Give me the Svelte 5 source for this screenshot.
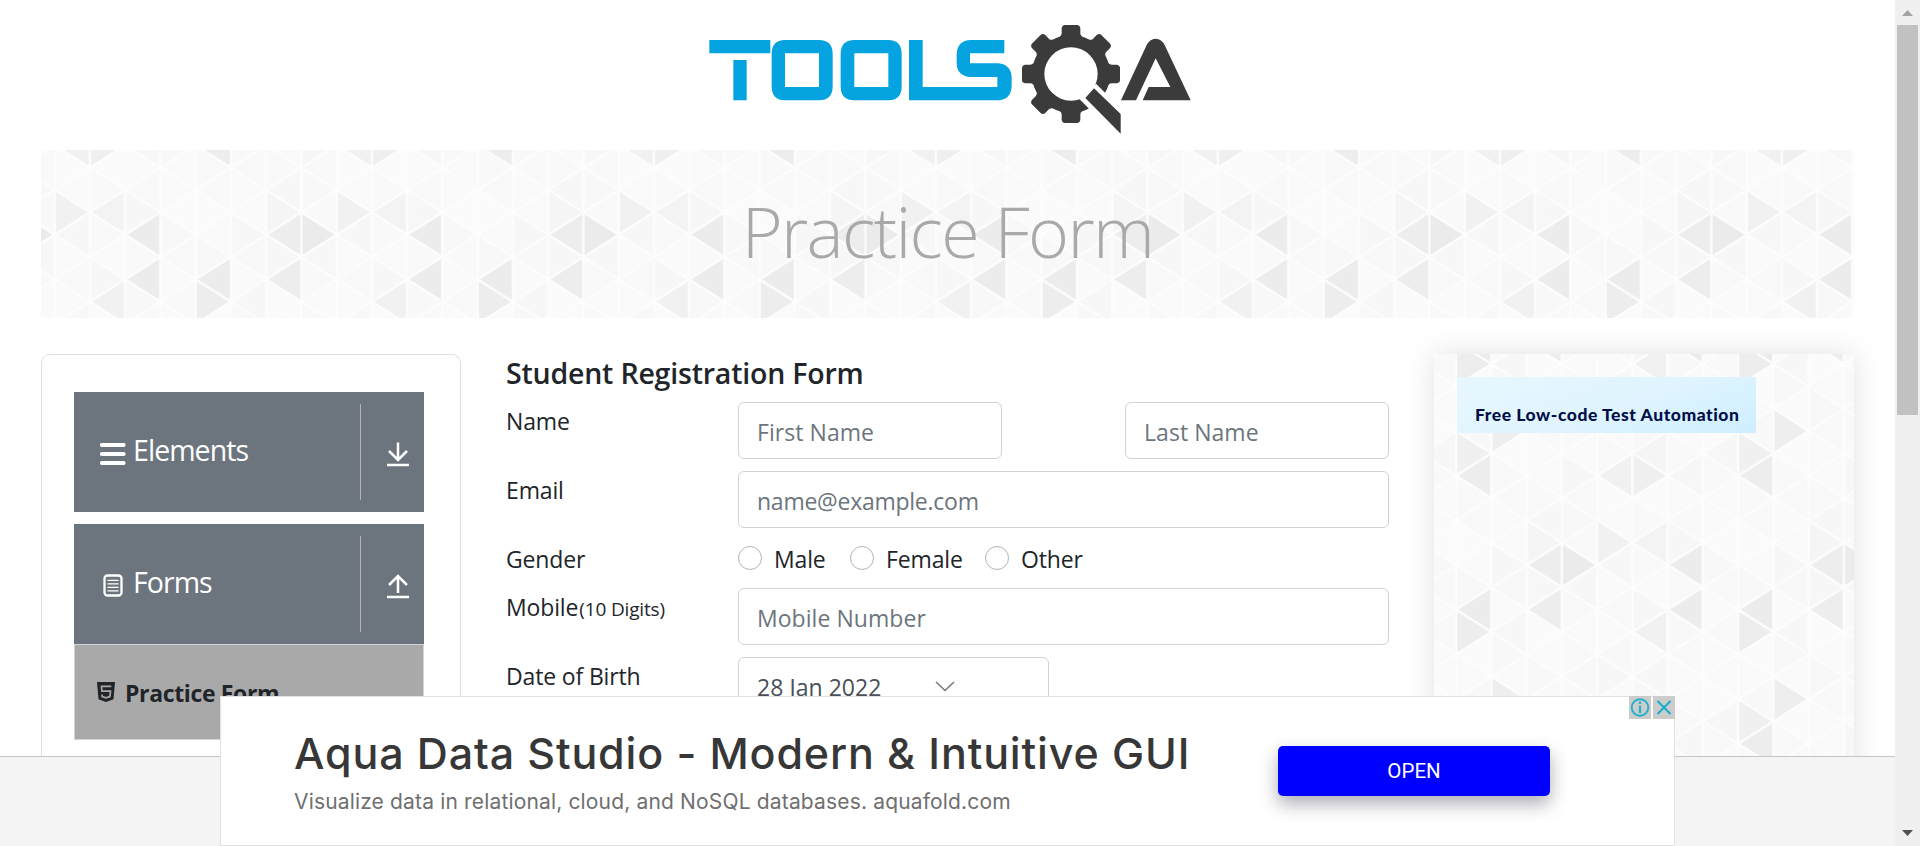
<script>
  const COL = 35.25;
  const ROW = 22.34;
  const key = {
    '0,0': '#ededed', '5,0': '#f1f1f1', '1,3': '#eeeeee', '0,4': '#f0f0f0', '0,5': '#ededed',
    '4,5': '#f1f1f1', '5,5': '#efefef', '5,4': '#f5f5f5', '4,8': '#f1f1f1', '5,8': '#f3f3f3',
    '2,8': '#f5f5f5', '2,9': '#ededed', '3,9': '#ebebeb', '6,9': '#ececec', '0,11': '#ececec',
    '2,11': '#ededed', '6,11': '#ececec'
  };
  const soft = ['#f9f9f9', '#fafafa', '#f8f8f8', '#fbfbfb', '#f9f9f9', '#f7f7f7', '#fafafa'];
  const triangles = [];
  for (let c = 0; c < 8; c++) {
    for (let r = -1; r <= 12; r++) {
      const j = (r + 12) % 12;
      const fill = key[`${c},${j}`] ?? soft[(c * 5 + j * 3 + ((c * j) % 4)) % 7];
      const y = r * ROW;
      const l = c * COL;
      const rt = l + COL;
      const points = (c + j) % 2 === 0
        ? `${l},${y - ROW} ${rt},${y} ${l},${y + ROW}`
        : `${rt},${y - ROW} ${l},${y} ${rt},${y + ROW}`;
      triangles.push({ points, fill });
    }
  }
  const teeth = [0, 45, 90, 180, 225, 270, 315];
  const genders = ['Male', 'Female', 'Other'];
</script>

{#snippet texture(id, x, y)}
  <svg class="texture" aria-hidden="true">
    <defs>
      <pattern {id} {x} {y} width="282" height="268.08" patternUnits="userSpaceOnUse">
        {#each triangles as t}
          <polygon points={t.points} fill={t.fill} stroke="#fdfdfd" stroke-width="2.2" />
        {/each}
      </pattern>
    </defs>
    <rect width="100%" height="100%" fill="url(#{id})" />
  </svg>
{/snippet}

<div class="window">
  <div class="page">
    <header>
      <svg class="logo" viewBox="0 0 1560 420" role="img" aria-label="ToolsQA">
        <g fill="#05a3e0">
          <path d="M58 90H241V130H58zM130 150H170V271H130z" />
          <path fill-rule="evenodd" d="M285 90H387Q428 90 428 132V229Q428 271 387 271H285Q245 271 245 229V132Q245 90 285 90zM285 130V231H387V130z" />
          <path fill-rule="evenodd" d="M493 90H595Q635 90 635 132V229Q635 271 595 271H493Q452 271 452 229V132Q452 90 493 90zM493 130V231H595V130z" />
          <path d="M657 90H698V231H922V201H842Q800 198 800 158V132Q802 92 842 90H943V130H840V160H925Q963 164 965 202V229Q963 269 925 271H657z" />
        </g>
        <g fill="#3b3b3b">
          <circle cx="1143" cy="192" r="117" />
          {#each teeth as a}
            <path transform="rotate({a} 1143 192)" d="M1101 84Q1115 80 1115 70V54Q1117 45 1125 45H1161Q1169 45 1171 54V70Q1171 80 1185 84V110H1101z" />
          {/each}
          <circle cx="1143" cy="192" r="80" fill="#fff" />
          <path fill="#fff" d="M1219 222L1251 254L1320 300V390L1250 350L1198 297L1168 267z" />
          <path d="M1212 235L1292 312V371L1186 264z" />
          <path d="M1293 271L1369 107Q1379 86 1397 86Q1415 86 1425 107L1502 271H1358L1376 231H1441L1397 145L1338 271z" />
        </g>
      </svg>
    </header>

    <section class="banner">
      {@render texture('tex-banner', -127.3, -116.3)}
      <h1>Practice Form</h1>
    </section>

    <main>
      <nav class="menu">
        <div class="group">
          <svg class="gicon" viewBox="0 0 30 30"><path d="M3.800 8H25.700M3.800 17H25.700M3.800 26H25.700" stroke="#fff" stroke-width="3.800" stroke-linecap="round" /></svg>
          <span class="gname">Elements</span>
          <span class="toggle">
            <svg viewBox="0 0 24 26"><path d="M12 1.5V19.500M3 10L12 19L21 10M1 24H23" fill="none" stroke="#fff" stroke-width="2.500" /></svg>
          </span>
        </div>
        <div class="group second">
          <svg class="gicon" viewBox="0 0 30 30"><rect x="6.500" y="6.500" width="17" height="20" rx="3" fill="none" stroke="#fff" stroke-width="2.300" /><path d="M9.500 11.300H20.500M9.500 14.800H20.500M9.500 18.300H20.500M9.500 21.800H20.500" stroke="#fff" stroke-width="1.300" /></svg>
          <span class="gname">Forms</span>
          <span class="toggle">
            <svg viewBox="0 0 24 26"><path d="M12 20V2.500M3 12L12 3L21 12M1 24H23" fill="none" stroke="#fff" stroke-width="2.500" /></svg>
          </span>
        </div>
        <div class="entry">
          <svg class="html5" viewBox="0 0 18 20"><path d="M0 0H18L16.500 17.300L9 20L1.500 17.300z" fill="#212529" /><path d="M14.300 4.300H4.500L4.900 9.100H13.500L12.900 14.600L9 15.900L5.200 14.600L5 12.500" fill="none" stroke="#a9a9a9" stroke-width="1.700" /></svg>
          <span>Practice Form</span>
        </div>
      </nav>

      <form>
        <h5>Student Registration Form</h5>
        <div class="row">
          <label for="first">Name</label>
          <div class="pair">
            <input id="first" placeholder="First Name" />
            <input placeholder="Last Name" aria-label="Last Name" />
          </div>
        </div>
        <div class="row">
          <label for="email">Email</label>
          <input id="email" class="email" placeholder="name@example.com" />
        </div>
        <div class="row gender">
          <span class="label">Gender</span>
          <div class="radios">
            {#each genders as g}
              <span class="radio {g.toLowerCase()}"><i></i><b>{g}</b></span>
            {/each}
          </div>
        </div>
        <div class="row">
          <label for="mobile">Mobile<small>(10 Digits)</small></label>
          <input id="mobile" placeholder="Mobile Number" />
        </div>
        <div class="row">
          <span class="label">Date of Birth</span>
          <div class="date">
            <span>28 Jan 2022</span>
            <svg viewBox="0 0 20 11"><path d="M1 1L10 9.500L19 1" fill="none" stroke="#777" stroke-width="1.500" /></svg>
          </div>
        </div>
      </form>

      <aside>
        {@render texture('tex-aside', 22.2, 10)}
        <div class="promo">Free Low-code Test Automation</div>
      </aside>
    </main>
    <footer></footer>

    <div class="ad">
      <div class="copy">
        <div class="title">Aqua Data Studio - Modern &amp; Intuitive GUI</div>
        <div class="desc">Visualize data in relational, cloud, and NoSQL databases. aquafold.com</div>
      </div>
      <button>OPEN</button>
      <div class="choices">
        <svg viewBox="0 0 22 23"><circle cx="11" cy="11.500" r="8.300" fill="none" stroke="#22b1cc" stroke-width="1.900" /><path d="M11 9.800V17M11 5.800V8" stroke="#22b1cc" stroke-width="2.300" /></svg>
        <svg viewBox="0 0 22 23"><path d="M4.500 5L17.500 18M17.500 5L4.500 18" stroke="#12aecb" stroke-width="2" /></svg>
      </div>
    </div>
  </div>

  <div class="scroll">
    <svg viewBox="0 0 25 25"><path d="M7 16H18L12.500 10z" fill="#a3a3a3" /></svg>
    <div class="thumb"></div>
    <svg class="down" viewBox="0 0 25 25"><path d="M7 9H18L12.500 15z" fill="#505050" /></svg>
  </div>
</div>

<style>
  :global(body) { margin: 0; background: #fff; }
  * { box-sizing: border-box; }
  .window {
    display: flex; width: 1920px; height: 846px; overflow: hidden; background: #fff;
    font-family: 'Open Sans', 'Noto Sans', sans-serif; font-size: 23px; color: #212529; letter-spacing: -0.15px;
  }
  .page { position: relative; width: 1895px; height: 846px; overflow: hidden; display: flex; flex-direction: column; }
  header { flex: none; height: 150px; padding: 10px 0 0 690px; }
  .logo { display: block; width: 520px; height: 140px; }
  .banner { position: relative; flex: none; height: 168px; margin: 0 41px; text-align: center; }
  .texture { position: absolute; inset: 0; width: 100%; height: 100%; display: block; }
  h1 { position: relative; margin: 0; font-weight: 300; font-size: 70px; line-height: 162px; color: #a9a9a9; letter-spacing: -1.65px; }
  main { flex: none; display: flex; align-items: flex-start; height: 438px; padding: 36px 41px 0; overflow: hidden; }
  .menu { flex: none; width: 420px; height: 600px; border: 1px solid #dfdfdf; border-radius: 9px; padding: 37px 36px 0 32px; }
  .group { display: flex; height: 120px; background: #6c757d; color: #fff; padding: 12px 0 12px 24px; }
  .second { margin-top: 12px; }
  .gicon { width: 30px; height: 30px; margin-top: 33px; flex: none; }
  .gname { margin-left: 5px; font-size: 28.5px; line-height: 93px; flex: 1; white-space: nowrap; letter-spacing: -0.95px; }
  .toggle { width: 64px; border-left: 1px solid #b3b3b3; padding: 37px 0 0 25px; }
  .toggle svg { display: block; width: 24px; height: 26px; }
  .entry {
    display: flex; height: 96px; border: 1px solid #ced4da; background: #a9a9a9; padding-left: 22px;
    font-weight: 700; line-height: 97px; white-space: nowrap; letter-spacing: -0.36px;
  }
  .html5 { width: 18px; height: 20px; margin: 37px 10px 0 0; }
  form { flex: none; width: 883px; margin-left: 45px; }
  h5 { margin: 0 0 12px; height: 36px; line-height: 38px; font-size: 28.5px; font-weight: 600; white-space: nowrap; letter-spacing: -0.2px; }
  .row { display: flex; height: 57px; margin-bottom: 12px; }
  .gender { height: 36px; margin-bottom: 12px; }
  label, .label { flex: none; width: 232px; line-height: 38px; white-space: nowrap; }
  small { font-size: 19px; margin-left: 1px; }
  .pair { display: flex; justify-content: space-between; width: 651px; }
  input, .date {
    height: 57px; width: 651px; border: 1px solid #ced4da; border-radius: 6px; background: #fff;
    padding: 3px 18px 0; font: inherit; color: #495057; letter-spacing: 0.05px;
  }
  .email { letter-spacing: -0.25px; }
  .pair input { width: 264px; }
  input::placeholder { color: #6c757d; opacity: 1; }
  .date { display: flex; width: 311px; line-height: 53px; }
  .date span { width: 178px; white-space: nowrap; }
  .date svg { width: 20px; height: 11px; margin-top: 20px; }
  .radios { display: flex; line-height: 38px; }
  .radio { display: flex; width: 112px; }
  .radio.female { width: 135px; }
  .radio i { width: 24px; height: 24px; margin: 6px 12px 0 0; border: 1px solid #adb5bd; border-radius: 50%; }
  .radio b { font-weight: 400; }
  aside { position: relative; flex: none; width: 420px; height: 600px; margin-left: 45px; padding: 23px; box-shadow: 0 0 28px rgba(0, 0, 0, .12); }
  .promo {
    position: relative; width: 299px; height: 56px; padding: 10px 0 0 18px; white-space: nowrap;
    background: linear-gradient(160deg, #e8f7ff, #dff4ff 55%, #ceeeff); color: #031048;
    font: 900 17.5px/56px Lato, sans-serif; letter-spacing: 0.55px;
  }
  footer { flex: 1; border-top: 1px solid #c6c6c6; background: #f4f4f4; }
  .ad { position: absolute; left: 220px; top: 696px; width: 1455px; height: 150px; display: flex; background: #fff; border: 1px solid #e1e1e3; }
  .copy { width: 1057px; padding: 27px 0 0 73px; white-space: nowrap; }
  .title { font: 500 43px/58px Inter, sans-serif; color: #373737; letter-spacing: 0.86px; }
  .desc { font: 400 21px/40px Inter, sans-serif; color: #6f6f6f; letter-spacing: 0.16px; }
  button {
    width: 272px; height: 50px; margin-top: 49px; border: 0; border-radius: 5px; background: #00f; color: #fff;
    font: 400 20.5px/50px Roboto, sans-serif; padding: 0; box-shadow: 0 8px 18px rgba(20, 20, 50, .35);
  }
  .choices { position: absolute; right: -1px; top: -1px; display: flex; gap: 2px; }
  .choices svg { width: 22px; height: 23px; background: #ccc; display: block; }
  .scroll { width: 25px; height: 846px; background: #f0f0f0; display: flex; flex-direction: column; }
  .scroll svg { width: 25px; height: 25px; flex: none; }
  .thumb { height: 390px; margin: 0 2px; background: #c1c1c1; }
  .scroll .down { margin-top: auto; }
</style>
